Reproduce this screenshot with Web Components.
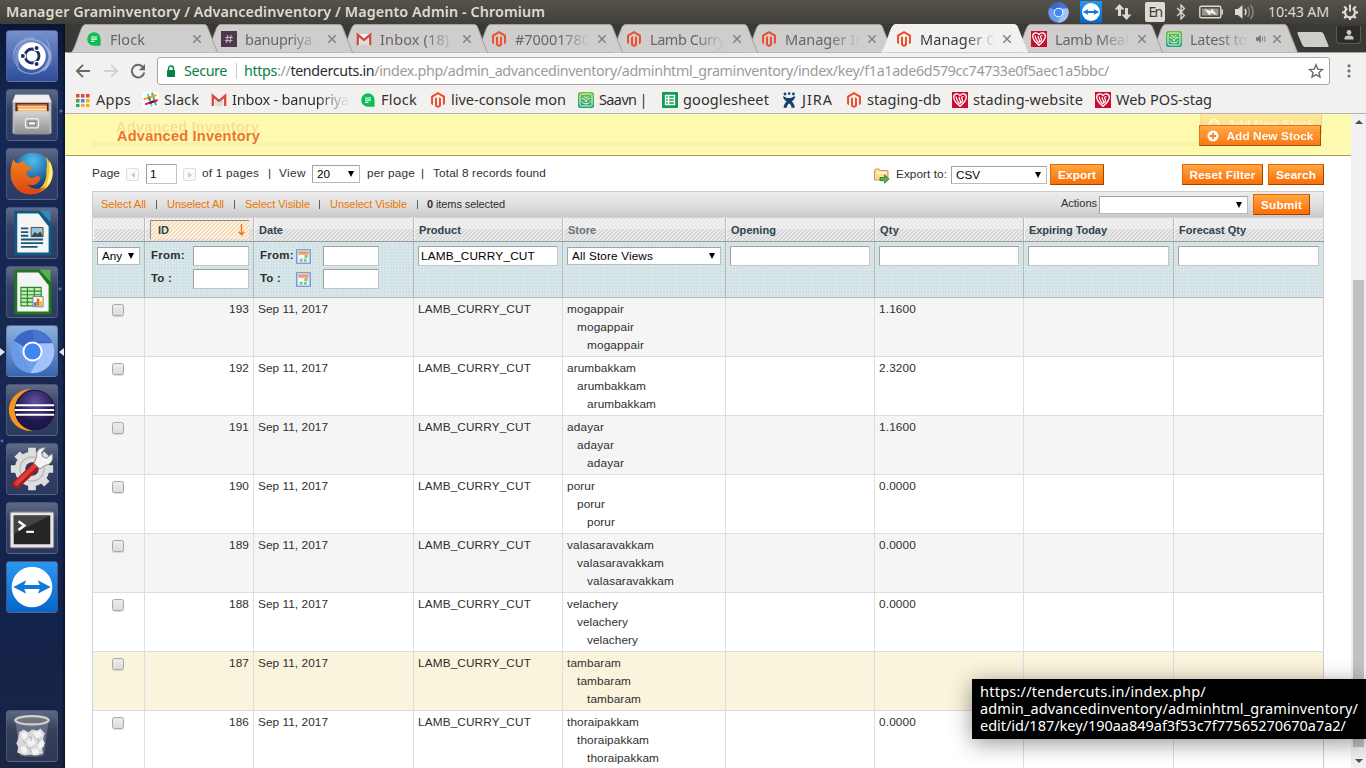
<!DOCTYPE html>
<html lang="en">
<head>
<meta charset="utf-8">
<title>Manager Graminventory / Advancedinventory / Magento Admin</title>
<style>
html,body{margin:0;height:768px;overflow:hidden;background:#fff;font-family:"Liberation Sans",Arial,sans-serif}
</style>
</head>
<body>
<desktop-shell></desktop-shell>
<script>
const UI='"Noto Sans","Open Sans",sans-serif';
const MAG='<svg viewBox="0 0 24 24"><path fill="#ee4d2e" d="M12 24l-4.455-2.572v-12l2.97-1.715v12.001l1.485.902 1.485-.902V7.713l2.971 1.715v12L12 24zM22.391 6v12l-2.969 1.714V7.713L12 3.43 4.574 7.713v12.001L1.609 18V6L12 0l10.391 6z"/></svg>';
const ICONS={
magento:MAG,
flock:'<svg viewBox="0 0 16 16"><path d="M8 1.200a6.800 6.800 0 1 0 0 13.600h6.600V8A6.700 6.700 0 0 0 8 1.200z" fill="#0abe51"/><path d="M5 6h6M5 8.200h6M5 10.400h3.500" stroke="#fff" stroke-width="1.200"/></svg>',
hash:'<svg viewBox="0 0 16 16"><path fill="#4d394b" d="M0 0h16v16H0z"/><path d="M6.800 4l-1.300 8M10.200 4l-1.300 8M4.400 6.500h7.400M4 9.600h7.400" stroke="#c9bfc8" stroke-width="1" fill="none"/></svg>',
gmail:'<svg viewBox="0 0 16 16"><path fill="#f1efee" d="M1 3h14v11H1z"/><path d="M2.500 4.500L8 9.300l5.500-4.800" fill="#fff"/><path d="M4 8l4 3 4-3v6H4z" fill="#dedbd9"/><path d="M1.800 14V3.800L8 9l6.200-5.200V14" fill="none" stroke="#d54b3d" stroke-width="2.300"/></svg>',
apps:'<svg viewBox="0 0 16 16"><path fill="#ea4335" d="M1 2h3.500v3.500H1zM6 2h3.500v3.500H6zM11 2h3.500v3.500H11z"/><path fill="#34a853" d="M1 7h3.500v3.500H1z"/><path fill="#4285f4" d="M6 7h3.500v3.500H6z"/><path fill="#fbb305" d="M11 7h3.500v3.500H11zM6 12h3.500v3H6zM11 12h3.500v3H11z"/><path fill="#34a853" d="M1 12h3.500v3H1z"/></svg>',
slack:'<svg viewBox="0 0 16 16"><rect width="16" height="16" rx="2" fill="#fff"/><g stroke-width="2.200" stroke-linecap="round"><path d="M5 2.500l3.600 11" stroke="#6ecadc"/><path d="M9.200 1.500l3.600 11" stroke="#3eb991"/><path d="M1.500 7l11-3.600" stroke="#e9a820"/><path d="M3 12l11-3.600" stroke="#e01765"/><path d="M6 5.600l.7 2.200" stroke="#2b9a88"/><path d="M7.800 10.500l2.200-.8" stroke="#5b1a36"/></g></svg>',
saavn:'<svg viewBox="0 0 16 16"><defs><linearGradient id="s" x2="0" y2="1"><stop stop-color="#6cc23c"/><stop offset="1" stop-color="#1fa182"/></linearGradient></defs><rect width="16" height="16" rx="2.500" fill="url(#s)"/><rect x="2" y="2" width="12" height="12" rx="1.500" fill="none" stroke="#e8f6e6"/><path d="M3.800 6.500c2 0 3.200 1 4.200 3.500 1-2.500 2.200-3.500 4.200-3.500M5.800 4.200L8 6.500l2.200-2.300M3.800 9.500c1 1.800 2.200 2.300 4.200 2.300s3.200-.5 4.200-2.300" fill="none" stroke="#fff" stroke-width="1"/></svg>',
sheet:'<svg viewBox="0 0 16 16"><rect width="16" height="16" rx="1" fill="#0f9d58"/><path d="M3.500 3.500h9v9h-9zM3.500 6.500h9M3.500 9.500h9M6.500 3.500v9" fill="none" stroke="#fff" stroke-width="1.300"/></svg>',
jira:'<svg viewBox="0 0 16 16"><g fill="#12406f"><circle cx="4" cy="2" r="1.400"/><circle cx="8.200" cy="1.500" r="1.300"/><circle cx="12.400" cy="2" r="1.400"/><path d="M2 4.200c1 0 2 .8 3 1.300 1.500.8 4.500.8 6 0 1.200-.6 2-1.300 3.200-1.300-.2 2.400-1.600 4-3.400 5.300 1.600 1.400 2.700 3.300 3 6.300h-3.200c-.2-2.200-.9-3.400-2.400-4.300-1.500.9-2.200 2.100-2.400 4.300H2.600c.2-3 1.400-4.900 3-6.300C3.800 8.200 2.200 6.600 2 4.200z"/></g></svg>',
heart:'<svg viewBox="0 0 16 16"><path fill="#c8102e" d="M0 0h16v16H0z"/><path d="M8 14.300C3.500 10.500 1.600 8 1.700 5 1.800 1.500 6 1 8 3.500 10 1 14.200 1.500 14.300 5c.1 3-1.800 5.500-6.300 9.300z" fill="#c8102e" stroke="#fff" stroke-width="1.300"/><path d="M4 4.500c.3 3 1.500 5 3.600 7.500M7.500 5c-1.300 1.500 0 2.500.7 3.500s0 2 .3 3.200M11.500 4.500c-2 .3-2.500 1.200-1.500 2.400s.5 2.600-.8 4" fill="none" stroke="#fff" stroke-width="1.200"/></svg>',
close:'<svg viewBox="0 0 10 10"><path d="M1.300 1.300l7.400 7.400M8.700 1.300L1.300 8.700" stroke="#848280" stroke-width="1.500"/></svg>',
audio:'<svg viewBox="0 0 11 10"><path d="M0 3.300h2L4.800 1v8L2 6.700H0z" fill="#777"/><path d="M6.500 2.700v4.600M8.800 2v6" stroke="#888" stroke-width="1"/></svg>',
back:'<svg viewBox="0 0 16 16"><path d="M15 8H2M8 1.800L1.800 8 8 14.200" fill="none" stroke="#6a6866" stroke-width="1.800"/></svg>',
fwd:'<svg viewBox="0 0 16 16"><path d="M1 8h13M8 1.800L14.200 8 8 14.200" fill="none" stroke="#d2d0ce" stroke-width="1.800"/></svg>',
reload:'<svg viewBox="0 0 16 16"><path d="M13.400 4.600A6.300 6.300 0 1 0 14.300 9.500" fill="none" stroke="#6a6866" stroke-width="1.900"/><path d="M15 1v6.200H8.800z" fill="#6a6866"/></svg>',
lock:'<svg viewBox="0 0 10 13"><path d="M2.500 6V3.500a2.500 2.500 0 0 1 5 0V6" fill="none" stroke="#0b8043" stroke-width="1.400"/><rect x="1" y="5" width="8" height="7" rx=".8" fill="#0b8043"/></svg>',
star:'<svg viewBox="0 0 16 16"><path d="M8 1.800l1.800 4.300 4.700.4-3.600 3 1.100 4.600L8 11.600l-4 2.500 1.100-4.600-3.600-3 4.700-.4z" fill="none" stroke="#6b6b6b" stroke-width="1.400"/></svg>',
menu:'<svg viewBox="0 0 4 16"><g fill="#757371"><circle cx="2" cy="2.800" r="1.600"/><circle cx="2" cy="7.900" r="1.600"/><circle cx="2" cy="13" r="1.600"/></g></svg>',
chromium:'<svg viewBox="0 0 46 46"><circle cx="23" cy="23" r="22" fill="#6ea0ee"/><path d="M23 23L4 12A22 22 0 0 1 43.500 14.500H23z" fill="#3b66c4"/><path d="M23 1A22 22 0 0 1 42.700 13H24z" fill="#4674cf"/><path d="M43.500 14.500A22 22 0 0 1 21 45l10-17-2-13z" fill="#a3c2fb"/><path d="M4 12l11 19 6 14A22 22 0 0 1 4 12z" fill="#6a99e8"/><circle cx="23" cy="23" r="10.300" fill="#fff"/><circle cx="23" cy="23" r="8.300" fill="#4285f4"/></svg>',
tv:'<svg viewBox="0 0 48 48"><defs><linearGradient id="t" x2="0" y2="1"><stop stop-color="#2a96ee"/><stop offset="1" stop-color="#0565cc"/></linearGradient></defs><rect width="48" height="48" rx="2" fill="url(#t)"/><circle cx="24" cy="24" r="19.500" fill="#fff"/><path d="M6 24l12.500-6.500-2 4.500h15l-2-4.500L42 24l-12.500 6.500 2-4.500h-15l2 4.500z" fill="#1277d8"/></svg>',
net:'<svg viewBox="0 0 18 18"><path d="M5.500 1L0.500 6.500H4V13h3V6.500h3.500zM12.500 17l5-5.500H14V5h-3v6.500H7.500z" fill="#dfdbd2"/></svg>',
bt:'<svg viewBox="0 0 10 18"><path d="M1.200 5l7.200 7.500L5 16V2l3.400 3.500L1.200 13" fill="none" stroke="#dfdbd2" stroke-width="1.300"/></svg>',
bat:'<svg viewBox="0 0 25 14"><rect x=".8" y="1.300" width="21" height="11.400" rx="1.500" fill="none" stroke="#dfdbd2" stroke-width="1.400"/><path d="M3 3.500h16.500v7H3z" fill="#99958c"/><path d="M5.500 4l6 2L13 3.500l5 6.500-6-2-1.500 2.500z" fill="#f4f1e8"/><path d="M22.500 4.500H24v5h-1.500z" fill="#dfdbd2"/></svg>',
vol:'<svg viewBox="0 0 20 16"><path d="M0 5h3l4.500-4v14L3 11H0z" fill="#dfdbd2"/><path d="M10 5q2 3 0 6" fill="none" stroke="#dfdbd2" stroke-width="1.500"/><path d="M12.700 3q3.600 5 0 10M15.600 1q5 7 0 14" fill="none" stroke="#8a877f" stroke-width="1.500"/></svg>',
power:'<svg viewBox="0 0 18 18"><path d="M9 1.500v7" stroke="#dfdbd2" stroke-width="2"/><path d="M6.300 5.200a5 5 0 1 0 5.400 0" fill="none" stroke="#dfdbd2" stroke-width="2.200"/><g stroke="#dfdbd2" stroke-width="2.200"><path d="M1 9.300h3M14 9.300h3M9 14V17M3.200 3.500L5.200 5.500M14.800 3.500L12.800 5.500M3.200 15.100L5.200 13.100M14.800 15.100L12.800 13.100"/></g></svg>',
user:'<svg viewBox="0 0 10 10"><circle cx="5" cy="2.500" r="2.400" fill="#c9c7c4"/><path d="M.5 9.500V8Q1 5.600 5 5.600T9.500 8v1.500z" fill="#c9c7c4"/></svg>',
dash:'<svg viewBox="0 0 52 52"><g fill="none" stroke="#c6d3f2" opacity=".5"><path d="M8 24C9 12 24 5 36 13c10 8 10 20 2 28" stroke-width="1.500"/><path d="M40 9c8 12 4 28-12 35M11 36C2 24 12 6 28 8" stroke-width="1"/><path d="M44 22C46 42 24 50 12 38" stroke-width="1.500"/></g><path d="M26 12C10 10 4 28 14 42 10 30 14 18 26 12zM34 12c10 8 12 20 0 30 16-6 16-24 0-30z" fill="#b6c6ee" opacity=".4"/><circle cx="26" cy="26" r="13.800" fill="#fff"/><circle cx="26" cy="26" r="7" fill="none" stroke="#1f2d63" stroke-width="2.800"/><g fill="#1f2d63" stroke="#fff" stroke-width="1.200"><circle cx="16.800" cy="26" r="2.600"/><circle cx="30.600" cy="18" r="2.600"/><circle cx="30.600" cy="34" r="2.600"/></g></svg>',
files:'<svg viewBox="0 0 52 52"><defs><linearGradient id="f" x2="0" y2="1"><stop stop-color="#d4d4d4"/><stop offset="1" stop-color="#8e8e8e"/></linearGradient></defs><path d="M8 4h36l3 7v35H5V11z" fill="#b9b9b9"/><path d="M8 4h36l3 8H5z" fill="#efefef"/><path d="M8 13h36v11H8z" fill="#4a3327"/><path d="M10 14h32v9H10z" fill="#d2571c"/><path d="M11 17h31v6H11z" fill="#f6b46e"/><path d="M10 16.500h32M11 20h31" stroke="#fff2df" stroke-width="1"/><rect x="7" y="22" width="38" height="25" rx="1" fill="url(#f)"/><rect x="19" y="30" width="14" height="10" rx="2" fill="#aaa" stroke="#eee" stroke-width="1.500"/><rect x="22" y="33" width="8" height="4" fill="#eee" stroke="#666" stroke-width=".8"/></svg>',
firefox:'<svg viewBox="0 0 52 52"><defs><radialGradient id="g" cx=".5" cy=".2" r=".7"><stop stop-color="#4fc0ee"/><stop offset="1" stop-color="#0c3e86"/></radialGradient><linearGradient id="h" x2="0" y2="1"><stop stop-color="#f2851c"/><stop offset="1" stop-color="#dd4312"/></linearGradient></defs><circle cx="27" cy="24" r="20" fill="url(#g)"/><path d="M40 8c8 8 10 20 4 29-5 7-14 11-22 9 14-2 20-12 19-24 1-5 1-10-1-14z" fill="#fbc529"/><path d="M44 12c6 10 4 22-4 29 3-8 5-18 4-29z" fill="#fff08a"/><path d="M7 10c0 3 2 5 5 5l6-3 1 5 6 1c1 2-1 4-5 6 1 5 5 8 9 5 3-1 5-1 6 1-2 7-8 9-14 7 4 5 13 6 19 2-6 10-23 12-32 0C2 32 3 19 7 10z" fill="url(#h)"/></svg>',
writer:'<svg viewBox="0 0 52 52"><path d="M7 2h27l13 14v34H7z" fill="#0f5a84"/><path d="M35 2h11v12z" fill="#3289bd"/><path d="M10 5h23l11 14v28H10z" fill="#f5f5f5"/><g stroke="#14587f" stroke-width="2"><path d="M14 21h8M14 25h8M14 29h8M14 33h24M14 37h24M14 41h18"/></g><path d="M25 20h13v10H25z" fill="#8dc6e8" stroke="#444" /><path d="M25 30l4-5 3 2 3-3 3 6z" fill="#3c4a45"/><circle cx="35" cy="22.500" r="1.500" fill="#f3c540"/></svg>',
calc:'<svg viewBox="0 0 52 52"><path d="M7 2h27l13 14v34H7z" fill="#1f7a1d"/><path d="M34 2h12v13z" fill="#55b54b"/><path d="M10 5h23l11 14v28H10z" fill="#f5f5f5"/><path d="M14 21h22v20H14z" fill="#c4edbe" stroke="#2e8a2b" stroke-width="1.200"/><path d="M14 25h22M14 29h22M14 33h22M14 37h22M21 21v20M28.500 21v20" stroke="#2e8a2b" stroke-width="1.300"/><path d="M27 31h11v11H27z" fill="#fff" stroke="#777"/><path d="M28 37h3v4h-3z" fill="#2789d8"/><path d="M31 33h3v8h-3z" fill="#e46b25"/><path d="M34 36h3v5h-3z" fill="#f0bb29"/></svg>',
eclipse:'<svg viewBox="0 0 52 52"><defs><radialGradient id="e" cy=".3"><stop stop-color="#6352a0"/><stop offset="1" stop-color="#20164e"/></radialGradient></defs><path d="M25 4C10 5 2 16 2 26s8 22 25 22C15 45 8 36 8 26S15 7 25 4z" fill="#f7941e"/><circle cx="29" cy="26" r="20.500" fill="url(#e)" stroke="#191238"/><path d="M9 21h40M8 26h41M9 31h40" stroke="#fff" stroke-width="2.200"/></svg>',
settings:'<svg viewBox="0 0 52 52"><circle cx="26" cy="26" r="18" fill="#dedede"/><g stroke="#dedede" stroke-width="8"><path d="M26 4v44M4 26h44M10.500 10.500l31 31M41.500 10.500l-31 31"/></g><circle cx="26" cy="26" r="12.500" fill="none" stroke="#bababa" stroke-width="1.500"/><circle cx="26" cy="26" r="7" fill="#2c3a5c"/><path d="M10 42L33 20" stroke="#a91a1a" stroke-width="8.500" stroke-linecap="round"/><path d="M10 41L31 20.500" stroke="#dd3c3b" stroke-width="4.500" stroke-linecap="round"/><path d="M28 20l6 6 6-4c5 0 9-5 7-12l-6 5-4-2-1-4 4-5c-7-1-10 4-9 9z" fill="#f4f4f4" stroke="#888"/></svg>',
term:'<svg viewBox="0 0 52 52"><rect x="3.500" y="9.500" width="45" height="37" rx="1.500" fill="#e6e6e2" stroke="#999"/><path d="M7 13h38v30H7z" fill="#252525"/><path d="M7 13h38L7 32z" fill="#444"/><path d="M12 19l6 4.500-6 4.500" fill="none" stroke="#fff" stroke-width="2.600"/><path d="M20 30h8" stroke="#fff" stroke-width="2.200"/></svg>',
trash:'<svg viewBox="0 0 52 52"><path d="M8 9l5 38q13 3 26 0l5-38z" fill="#8994a8" opacity=".5"/><ellipse cx="26" cy="9" rx="18" ry="4.500" fill="#72747a" stroke="#d2d2cd" stroke-width="2.500"/><path d="M12 22l5-3 5 3 4-3 6 1 3-2 5 5-2 6 2 5-3 5 1 6-7 2-7-1-6 1-8-3 1-6-2-4 2-5z" fill="#d9d9d9"/><g fill="#f4f4f4"><path d="M14 24l5-3 3 5-5 4zM27 22l8-2 2 6-6 3zM20 31l7-3 3 6-7 4zM32 33l6-2 1 6-6 4zM14 37l6 1 1 6-6 1zM25 41l6-2 3 5-6 3z"/></g><path d="M22 26l4 2-2 4M31 29l3 2-2 4M20 38l4 1 1 5M16 31l3 3" stroke="#aaa" fill="none"/></svg>',
exporter:'<svg viewBox="0 0 16 16"><path d="M.5 2.500V12h9L14 9V2.500H6.500L5 1H1.500z" fill="#f8dc95" stroke="#cf9b45"/><path d="M3 5h9" stroke="#fff8e5" stroke-width="1.500"/><path d="M6 9.500h4.500V6.800l4.700 4.200-4.700 4.200v-2.500H6z" fill="#5eb04a" stroke="#2f7a25" stroke-width=".8"/></svg>',
cal:'<svg viewBox="0 0 16 16"><path d="M.8.8h14.400v14.400H.8z" fill="#dcebfa" stroke="#5f8bc9" stroke-width="1.200"/><path d="M2.500 2.500h11v3.500h-11z" fill="#f79a5c"/><path d="M3 6.500h10v7H3z" fill="#f6fafd"/><path d="M9 6.500h3.500v3H9zM4 10.500h3v3H4zM8.500 10.500h3v3h-3z" fill="#8bc28a"/></svg>',
plus:'<svg viewBox="0 0 12 12"><circle cx="6" cy="6" r="5.500" fill="#fff"/><path d="M6 2.800v6.400M2.800 6h6.400" stroke="#ee7b1d" stroke-width="1.800"/></svg>',
sort:'<svg viewBox="0 0 7 12"><path d="M3.500 0v10.500M.8 7.800l2.700 3 2.700-3" fill="none" stroke="#f37317" stroke-width="1.400"/></svg>'
};
const define=(name,render,after)=>customElements.define(name,class extends HTMLElement{
  connectedCallback(){
    if(this.shadowRoot)return;
    this.attachShadow({mode:'open'}).innerHTML=render(this);
    if(after)after(this);
  }
});
const fits=new Set();

/* Text run tracked out (or in) to a fixed advance width. */
define('fit-text',()=>`<style>:host{display:inline-block;white-space:pre;flex:none}span{display:inline-block}</style><span><slot></slot></span>`,el=>fits.add(el));
define('ui-icon',el=>`<style>:host{display:block;flex:none;width:${el.getAttribute('w')||16}px;height:${el.getAttribute('h')||el.getAttribute('w')||16}px}svg{display:block;width:100%;height:100%}</style>${ICONS[el.getAttribute('name')]}`);
define('ui-select',el=>`<style>:host{display:flex;flex:none;box-sizing:border-box;width:${el.getAttribute('w')}px;height:18px;border:1px solid #aaa;border-color:#a2a2a2 #bbb #bbb #a2a2a2;background:#fff;color:#000;font-size:11.700px;line-height:16px;padding:0 5px 0 4px;align-items:center;justify-content:space-between}i{width:0;height:0;border:3.500px solid transparent;border-top:6px solid #000;border-bottom:0}</style><span><slot></slot></span><i></i>`);
define('ui-input',el=>`<style>:host{display:block;flex:none;box-sizing:border-box;width:${el.getAttribute('w')}px;height:20px;border:1px solid #c4c4c4;border-top-color:#a0a0a0;border-left-color:#a0a0a0;background:#fff;color:#000;font-size:11.800px;line-height:18px;padding-left:2px}</style><slot></slot>`);
define('ui-button',el=>`<style>:host{display:flex;flex:none;box-sizing:border-box;width:${el.getAttribute('w')}px;height:21px;border:1px solid #ed6502;border-right-color:#a04300;border-bottom-color:#a04300;background:linear-gradient(#ffa743,#fb7209 90%);color:#fff;font:bold 11.800px/18px "Liberation Sans",Arial,sans-serif;align-items:center;justify-content:center;gap:8px}</style><slot></slot>`);

define('system-bar',()=>`<style>
:host{display:flex;height:24px;align-items:center;background:linear-gradient(#55534b,#3f3e39);color:#dfdbd2;font:600 14.300px/24px ${UI};padding-left:6px;flex:none}
.en{width:20px;height:20px;background:#dfdbd2;color:#3c3b37;border-radius:2px;font:14px/20px ${UI};text-align:center;margin:0 11px 0 13px}
.clock{font-weight:400;margin-left:13px}
</style><fit-text w="539">Manager Graminventory / Advancedinventory / Magento Admin - Chromium</fit-text>
<ui-icon name="chromium" w="21" style="margin-left:503px"></ui-icon><ui-icon name="tv" w="22" style="margin-left:11px"></ui-icon><ui-icon name="net" w="18" style="margin-left:12px"></ui-icon>
<div class="en"><fit-text w="13">En</fit-text></div><ui-icon name="bt" w="10" h="18"></ui-icon><ui-icon name="bat" w="25" h="14" style="margin-left:13px"></ui-icon><ui-icon name="vol" w="20" h="16" style="margin-left:11px"></ui-icon>
<fit-text class="clock" w="61">10:43 AM</fit-text><ui-icon name="power" w="18" style="margin-left:12px"></ui-icon>`);

define('app-launcher',()=>`<style>
:host{display:flex;flex-direction:column;box-sizing:border-box;width:65px;height:744px;padding:6px 7px 6px 6px;gap:7px;flex:none;background:radial-gradient(circle at 61px 87px,#4274b5 0 1px,transparent 2px),radial-gradient(circle at 60px 265px,#4274b5 0 1px,transparent 2px),radial-gradient(circle at 2px 417px,#4a6cb0 0 1px,transparent 2px),linear-gradient(90deg,transparent 62px,#070f24 65px),linear-gradient(#0a1634,#142653 10%,#182850 50%,#13224a 80%,#1a2543)}
.tile{box-sizing:border-box;position:relative;width:52px;height:52px;border-radius:4px;border:1px solid #59668aa0;background:linear-gradient(#ffffff50,#ffffff20 40%,#ffffff18);display:flex;align-items:center;justify-content:center}
.dash{background:linear-gradient(#7690cc,#2e4d9b)}.on{background:linear-gradient(#8fb0dc,#3665b2)}.last{margin-top:auto}
.on:before,.on:after{content:"";position:absolute;top:22px;border:4px solid transparent}
.on:before{left:-7px;border-left:5px solid #e4e4e4;border-right:0}.on:after{right:-7px;border-right:5px solid #e4e4e4;border-left:0}
</style>${[['dash',52],['files',48],['firefox',50],['writer',48],['calc',48],['chromium',45],['eclipse',50],['settings',50],['term',50],['tv',50],['trash',48]].map(([n,w])=>`<div class="tile ${n=='dash'?'dash':n=='chromium'?'on':n=='trash'?'last':''}"><ui-icon name="${n}" w="${w}"></ui-icon></div>`).join('')}`);

define('browser-tab',el=>{const on=el.hasAttribute('active');return `<style>
:host{display:flex;position:relative;width:147px;height:28px;margin-right:-12px;flex:none;align-items:center;box-sizing:border-box;padding:2px 16px 0 15px;z-index:${el.getAttribute('z')};color:${on?'#3a3a3a':'#686664'};font:14.500px/26px ${UI}}
svg{position:absolute;inset:0;z-index:-1}
.t{flex:1;overflow:hidden;margin:0 7px 0 8px;white-space:nowrap;-webkit-mask:linear-gradient(90deg,#000 calc(100% - 30px),transparent)}
</style><svg width="147" height="29"><path d="M0 28.500C3 28.500 9.500 4 12 1.800q1-1.300 3-1.300H133q2 0 3 1.500L146.500 28.500" fill="${on?'#f2f1f0':'#d0cecd'}" stroke="${on?'#f2f1f0':'#a3a19f'}"/></svg>
<ui-icon name="${el.getAttribute('icon')}" w="16"></ui-icon><div class="t"><slot></slot></div>${el.hasAttribute('audio')?'<ui-icon name="audio" w="11" h="10" style="margin-right:5px"></ui-icon>':''}<ui-icon name="close" w="10"></ui-icon>`});

define('tab-strip',()=>`<style>:host{display:flex;height:28px;background:#3b3935;padding-left:6px;flex:none;border-bottom:1px solid #a3a19f;isolation:isolate}
.new{width:26px;height:15px;transform:skewX(23deg);background:#cfcdcb;border-radius:2px;margin:8px 0 0 14px}
.user{box-sizing:border-box;width:25px;height:18px;margin:2px 0 0 10px;background:#2c2b28;border:1px solid #5c5a55;border-top:0;border-radius:0 0 4px 4px;display:flex;align-items:center;justify-content:center}
</style>${[['flock','Flock',35],['hash','banupriya |',78],['gmail','Inbox (18) -',78],['magento','#70001780',75],['magento','Lamb Curry',75],['magento','Manager In',79],['magento','Manager Gr',83],['heart','Lamb Meat',75],['saavn','Latest to',57]].map(([i,t,w],k)=>`<browser-tab icon="${i}" z="${k==6?20:10-k}" ${k==6?'active':''} ${k==8?'audio':''}><fit-text w="${w}">${t}</fit-text></browser-tab>`).join('')}<div class="new"></div><div class="user"><ui-icon name="user" w="10"></ui-icon></div>`);

define('address-bar',()=>`<style>
:host{display:flex;align-items:center;height:36px;padding:0 0 0 10px;flex:none;font:14.300px/26px ${UI};color:#9b9b9b}
.box{box-sizing:border-box;width:1173px;height:28px;margin:0 17px 0 11px;border:1px solid #a9a7a5;border-radius:3px;background:#fff;display:flex;align-items:center;padding-left:8px}
.g{color:#0b8043}b{font-weight:400;color:#2b2b2b}hr{width:1px;height:16px;border:0;background:#c8c8c8;margin:0 7px 0 9px}
</style><ui-icon name="back" w="16"></ui-icon><ui-icon name="fwd" w="16" style="margin-left:12px"></ui-icon><ui-icon name="reload" w="16" style="margin-left:11px"></ui-icon>
<div class="box"><ui-icon name="lock" w="10" h="13"></ui-icon><fit-text class="g" w="43" style="margin-left:8px">Secure</fit-text><hr><fit-text w="865"><span class="g">https</span>://<b>tendercuts.in</b>/index.php/admin_advancedinventory/adminhtml_graminventory/index/key/f1a1ade6d579cc74733e0f5aec1a5bbc/</fit-text><ui-icon name="star" w="16" style="margin:0 5px 0 auto"></ui-icon></div><ui-icon name="menu" w="4" h="16"></ui-icon>`);

define('bookmark-bar',()=>`<style>
:host{display:grid;grid-template-columns:68px 68px 149px 70px 148px 84px 119px 65px 106px 143px 1fr;height:25px;align-items:center;padding:0 0 3px 10px;border-bottom:1px solid #b4b2b0;font:14.500px/21px ${UI};color:#33312f;flex:none;box-sizing:border-box}
div{display:flex;align-items:center;gap:5px}.fade fit-text{-webkit-mask:linear-gradient(90deg,#000 85px,transparent)}
</style>${[['apps','Apps',35],['slack','Slack',35],['gmail','Inbox - banupriya',117],['flock','Flock',36],['magento','live-console mon',115],['saavn','Saavn |',48],['sheet','googlesheet',86],['jira','JIRA',31],['magento','staging-db',74],['heart','stading-website',110],['heart','Web POS-stag',96]].map(([i,t,w],k)=>`<div class="${k==2?'fade':''}"><ui-icon name="${i}" w="16"></ui-icon><fit-text w="${w}">${t}</fit-text></div>`).join('')}`);

define('page-banner',()=>`<style>
:host{display:block;position:relative;height:42px;box-sizing:border-box;border-bottom:1px solid #a99d69;background:linear-gradient(#fdfab0 0 0);overflow:hidden;flex:none;color:#ec7430;font:bold 14.600px/22px "Liberation Sans",Arial,sans-serif}
.row{display:flex;justify-content:space-between;padding:11px 30px 0 52px}
.ghost{position:absolute;left:-1px;right:-1px;opacity:.2;top:-9px}.line{position:absolute;left:27px;right:27px;top:28px;height:4px;background:#f8f3a6}
.main{position:relative}.main ui-button{opacity:.92}
</style><div class="line"></div><div class="row ghost"><fit-text w="143">Advanced Inventory</fit-text><ui-button w="122" style="margin-top:-3px"><ui-icon name="plus" w="12"></ui-icon><fit-text w="87">Add New Stock</fit-text></ui-button></div>
<div class="row main"><fit-text w="143">Advanced Inventory</fit-text><ui-button w="122"><ui-icon name="plus" w="12"></ui-icon><fit-text w="87">Add New Stock</fit-text></ui-button></div>`);

define('grid-pager',()=>`<style>
:host{display:flex;height:21px;align-items:center;font-size:11.800px;line-height:14px;color:#2f2f2f;margin-top:8px}
.a{box-sizing:border-box;width:13px;height:13px;border:1px solid #ddd;border-radius:2px;background:#fafafa;display:flex;align-items:center;justify-content:center;margin:0 0 0 7px}
.a:before{content:"";border:3px solid transparent;border-right:4px solid #ccc;border-left:0}.n:before{transform:scaleX(-1)}
:host>fit-text{margin-top:-3px}:host>ui-input,:host>ui-select{margin-top:-1px}
</style><fit-text w="28">Page</fit-text><div class="a" style="margin-left:6px"></div><ui-input w="31" style="margin-left:7px;padding-left:3px">1</ui-input><div class="a n" style="margin-left:6px"></div><fit-text w="57" style="margin-left:6px">of 1 pages</fit-text><fit-text w="3" style="margin-left:9px">|</fit-text><fit-text w="27" style="margin-left:8px">View</fit-text><ui-select w="48" style="margin-left:6px">20</ui-select><fit-text w="48" style="margin-left:7px">per page</fit-text><fit-text w="3" style="margin-left:6px">|</fit-text><fit-text w="113" style="margin-left:9px">Total 8 records found</fit-text>
<ui-icon name="exporter" w="16" style="margin:3px 6px 0 auto"></ui-icon><fit-text w="51" style="margin-top:-1px">Export to:</fit-text><ui-select w="96" style="margin:1px 3px 0 4px">CSV</ui-select><ui-button w="54"><fit-text w="38">Export</fit-text></ui-button><ui-button w="81" style="margin-left:78px"><fit-text w="66">Reset Filter</fit-text></ui-button><ui-button w="56" style="margin-left:5px"><fit-text w="40">Search</fit-text></ui-button>`);

define('mass-actions',()=>`<style>
:host{display:flex;box-sizing:border-box;height:27px;margin-top:6px;border:1px solid #ccc;border-bottom:1px solid #d2d2d2;align-items:center;padding:0 13px 0 8px;background:linear-gradient(#ededed,#e0e0e0 50%,#c9c9c9);font-size:11px;line-height:13px;color:#2f2f2f}
a{color:#ea7601}i{width:1px;height:9px;background:#55616b;margin:0 10px 0 10px}:host>fit-text,a{margin-top:-1px}
</style><a><fit-text w="45">Select All</fit-text></a><i></i><a><fit-text w="57">Unselect All</fit-text></a><i></i><a><fit-text w="65">Select Visible</fit-text></a><i style="margin-left:9px"></i><a><fit-text w="77">Unselect Visible</fit-text></a><i style="margin-right:9px"></i><fit-text w="78"><b>0</b> items selected</fit-text>
<fit-text w="36" style="margin:-3px 2px 0 auto">Actions</fit-text><ui-select w="149" style="margin-right:5px"></ui-select><ui-button w="57"><fit-text w="41">Submit</fit-text></ui-button>`);

const COLS='52px 109px 160px 149px 163px 149px 149px 150px 150px';
define('grid-head',()=>`<style>
:host{display:grid;grid-template-columns:${COLS};border-left:1px solid #ccc;height:24px;box-sizing:border-box;border-bottom:1px solid #999;font:bold 11px/24px "Liberation Sans",Arial,sans-serif;color:#2d444f}
div{box-sizing:border-box;border-right:1px solid #bbb;border-left:1px solid #f6f6f6;padding-left:4px;background:repeating-linear-gradient(135deg,#ffffff80 0 .9px,transparent .9px 2.828px),linear-gradient(#e6e6e6 48%,#d6d6d6 48%);display:flex;min-height:0;height:23px}
div:first-child{border-left:0}div:last-child{border-right-color:#ccc}.s{color:#67767e}
.id{padding:2px 4px 2px 4px}.id p{margin:0;flex:1;display:flex;justify-content:space-between;align-items:center;padding:0 4px 0 7px;line-height:18px;border:1px solid #8f8f8f;border-right:0;border-bottom:0;background:repeating-linear-gradient(135deg,#fff3e6 0 1.200px,#f7d9b8 1.200px 2.828px)}
</style><div></div><div class="id"><p><fit-text w="11">ID</fit-text><ui-icon name="sort" w="7" h="12"></ui-icon></p></div><div><fit-text w="24">Date</fit-text></div><div><fit-text w="42">Product</fit-text></div><div class="s"><fit-text w="28">Store</fit-text></div><div><fit-text w="45">Opening</fit-text></div><div><fit-text w="19">Qty</fit-text></div><div><fit-text w="78">Expiring Today</fit-text></div><div><fit-text w="67">Forecast Qty</fit-text></div>`);

define('grid-filter',()=>`<style>
:host{display:grid;grid-template-columns:${COLS};border-left:1px solid #ccc;height:56px;box-sizing:border-box;border-bottom:1px solid #b4b8ba;font-size:11.500px;color:#2f2f2f;background:#cfdfe3}
.c{box-sizing:border-box;border-right:1px solid #b4b8ba;padding:4px 0 0 4px;background:repeating-linear-gradient(#d9e8eb 0 1px,transparent 1px 3px),repeating-linear-gradient(90deg,#d9e8eb 0 1px,transparent 1px 3px)}
.r{display:flex;font-weight:bold;height:20px;line-height:18px;margin-bottom:3px}
</style><div class="c" style="padding-top:5px"><ui-select w="43"><fit-text w="20">Any</fit-text></ui-select></div>
<div class="c" style="padding-left:6px"><div class="r"><fit-text w="34" box="42">From:</fit-text><ui-input w="56"></ui-input></div><div class="r"><fit-text w="21" box="42">To :</fit-text><ui-input w="56"></ui-input></div></div>
<div class="c" style="padding-left:6px">${[['From:',34],['To :',21]].map(([t,w])=>`<div class="r"><fit-text w="${w}" box="36">${t}</fit-text><ui-icon name="cal" w="15" style="margin:3px 12px 0 0"></ui-icon><ui-input w="56"></ui-input></div>`).join('')}</div>
<div class="c"><ui-input w="140"><fit-text w="114">LAMB_CURRY_CUT</fit-text></ui-input></div><div class="c" style="padding-top:5px"><ui-select w="154"><fit-text w="81">All Store Views</fit-text></ui-select></div>
<div class="c"><ui-input w="140"></ui-input></div><div class="c"><ui-input w="140"></ui-input></div><div class="c"><ui-input w="141"></ui-input></div><div class="c" style="border-right-color:#ccc"><ui-input w="141"></ui-input></div>`);

define('stock-row',el=>{const s=el.getAttribute('store'),w=el.getAttribute('sw');return `<style>
:host{display:grid;grid-template-columns:${COLS};border-left:1px solid #cbd3d4;height:59px;font-size:11.800px;line-height:18px;color:#2f2f2f;background:${el.getAttribute('bg')}}
div{box-sizing:border-box;border-right:1px solid #dadfe0;border-bottom:1px solid #dadfe0;padding:2px 4px 0}div:last-child{border-right-color:#ccc}
p{margin:0}.id{text-align:right}i{display:block;box-sizing:border-box;width:12px;height:12px;border:1px solid #a6a6a6;border-radius:2.500px;background:linear-gradient(#ededed,#dcdcdc);box-shadow:0 1px 1px #0002;margin:4px 0 0 15px}
</style><div><i></i></div><div class="id"><fit-text w="20">${el.id.slice(1)}</fit-text></div><div><fit-text w="70">Sep 11, 2017</fit-text></div><div><fit-text w="113">LAMB_CURRY_CUT</fit-text></div><div>${[0,10,20].map(m=>`<p style="padding-left:${m}px"><fit-text w="${w}">${s}</fit-text></p>`).join('')}</div><div></div><div>${el.getAttribute('qty')?`<fit-text w="37">${el.getAttribute('qty')}</fit-text>`:''}</div><div></div><div></div>`});

define('scroll-bar',()=>`<style>:host{display:flex;flex-direction:column;box-sizing:border-box;width:15px;background:#f1f1f1;padding:6px 0 5px;align-items:center;flex:none}
i{border:4px solid transparent}.u{border-bottom:4px solid #505050;border-top:0}.d{border-top:4px solid #505050;border-bottom:0;margin-top:auto}b{width:11px;height:467px;background:#c1c1c1;margin-top:156px}</style><i class="u"></i><b></b><i class="d"></i>`);

define('link-tooltip',()=>`<style>:host{position:absolute;left:972px;top:679px;width:394px;height:60px;box-sizing:border-box;padding:4px 8px;background:#000;color:#fff;font:14.500px/17px ${UI};box-shadow:0 4px 22px #0000006b}div{height:17px}</style>
<div><fit-text w="226">https://tendercuts.in/index.php/</fit-text></div><div><fit-text w="378">admin_advancedinventory/adminhtml_graminventory/</fit-text></div><div><fit-text w="366">edit/id/187/key/190aa849af3f53c7f77565270670a7a2/</fit-text></div>`);

const ROWS=[[193,'mogappair',57,'1.1600'],[192,'arumbakkam',69,'2.3200'],[191,'adayar',37,'1.1600'],[190,'porur',28,'0.0000'],[189,'valasaravakkam',87,'0.0000'],[188,'velachery',51,'0.0000'],[187,'tambaram',54,'0.0000'],[186,'thoraipakkam',72,'0.0000']];
define('desktop-shell',()=>`<style>
:host{display:flex;flex-direction:column;position:relative;width:1366px;height:768px;overflow:hidden}
.work{display:flex;height:744px}.win{flex:1;min-width:0;display:flex;flex-direction:column;background:#f2f1f0}
.view{display:flex;flex:1;min-height:0;background:#fff}.page{flex:1;min-width:0;overflow:hidden}.content{margin:0 27px}
</style><system-bar></system-bar><div class="work"><app-launcher></app-launcher><div class="win"><tab-strip></tab-strip><address-bar></address-bar><bookmark-bar></bookmark-bar>
<div class="view"><div class="page"><page-banner></page-banner><div class="content"><grid-pager></grid-pager><mass-actions></mass-actions><grid-head></grid-head><grid-filter></grid-filter>
${ROWS.map(([id,s,w,q],k)=>`<stock-row id="r${id}" store="${s}" sw="${w}" qty="${k==6?'':q}" bg="${k==6?'#faf4dc':k%2?'#fff':'#f5f5f5'}"></stock-row>`).join('')}
</div></div><scroll-bar></scroll-bar></div></div></div><link-tooltip></link-tooltip>`);

fits.forEach(el=>{
  const span=el.shadowRoot.querySelector('span'),w=+el.getAttribute('w'),n=el.textContent.length;
  span.style.letterSpacing=((w-span.getBoundingClientRect().width)/n).toFixed(3)+'px';
  el.style.width=(el.getAttribute('box')||w)+'px';
});
</script>
</body>
</html>
